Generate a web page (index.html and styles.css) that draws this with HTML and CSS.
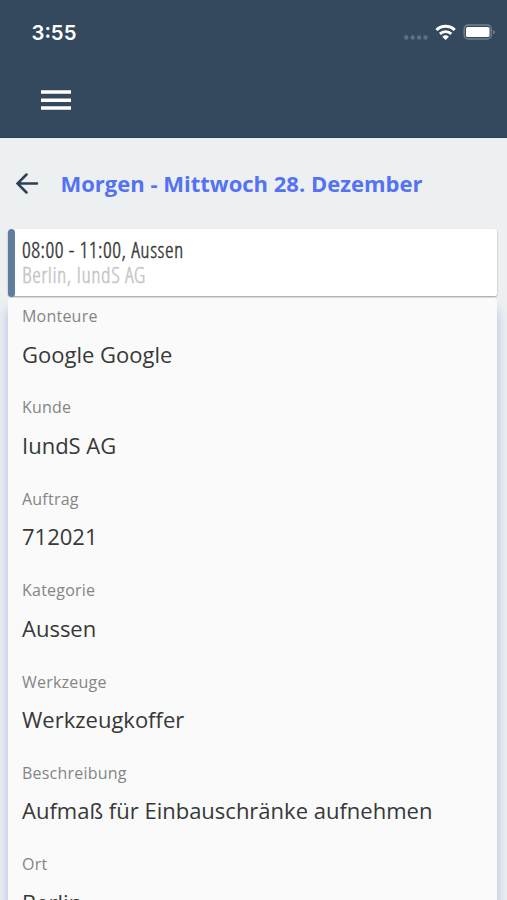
FILE: index.html
```html
<!DOCTYPE html>
<html lang="de">
<head>
<meta charset="utf-8">
<title>Termin</title>
<link rel="stylesheet" href="styles.css">
</head>
<body>
<header class="top">
  <div class="status">
    <span class="time">3:55</span>
    <svg width="94" height="20" viewBox="0 0 94 20">
      <g fill="#5e7082"><circle cx="3.300" cy="15.500" r="2.200"/><circle cx="9.700" cy="15.500" r="2.200"/><circle cx="16.100" cy="15.500" r="2.200"/><circle cx="22.500" cy="15.500" r="2.200"/></g>
      <g fill="none" stroke="#fff" stroke-width="2.800"><path d="M33.400 8a13.200 13.200 0 0 1 18.400 0"/><path d="M36.900 11.900a8.400 8.400 0 0 1 11.400 0"/></g>
      <path d="M39.300 14.700a4.700 4.700 0 0 1 6.600 0L42.600 18z" fill="#fff"/>
      <rect x="61.200" y="3" width="27" height="14" rx="4" fill="none" stroke="#72818f" stroke-width="1.500"/>
      <rect x="63" y="5" width="23.500" height="10" rx="1.500" fill="#fff"/>
      <path d="M90.200 8q3.400 2.200 0 4.500z" fill="#7b8997"/>
    </svg>
  </div>
  <svg class="menu" width="30" height="20" viewBox="0 0 30 20"><path d="M0 2h30M0 10.200h30M0 18h30" stroke="#fff" stroke-width="3.500"/></svg>
</header>
<main>
  <div class="day">
    <svg width="24" height="22" viewBox="0 0 24 22" fill="none" stroke="#2d4053" stroke-width="2.500" stroke-linecap="round"><path d="M22 10.500H2.500M11.500 1.500L2.500 10.500l9 9"/></svg>
    <h1>Morgen - Mittwoch 28. Dezember</h1>
  </div>
  <section class="event">
    <div class="bar"></div>
    <div class="summary">
      <div class="slot">08:00 - 11:00, Aussen</div>
      <div class="place">Berlin, IundS AG</div>
    </div>
  </section>
  <dl class="details">
    <div class="field"><dt>Monteure</dt><dd>Google Google</dd></div>
    <div class="field"><dt>Kunde</dt><dd>IundS AG</dd></div>
    <div class="field"><dt>Auftrag</dt><dd>712021</dd></div>
    <div class="field"><dt>Kategorie</dt><dd>Aussen</dd></div>
    <div class="field"><dt>Werkzeuge</dt><dd>Werkzeugkoffer</dd></div>
    <div class="field"><dt>Beschreibung</dt><dd>Aufmaß für Einbauschränke aufnehmen</dd></div>
    <div class="field"><dt>Ort</dt><dd>Berlin</dd></div>
  </dl>
</main>
</body>
</html>
```
FILE: styles.css
```css
* { box-sizing: border-box; }
html { height: 900px; overflow: hidden; }
body { margin: 0; height: 900px; overflow: hidden; background: #ecf0f1; font-family: "Open Sans", sans-serif; color: #383838; }
.top { height: 138px; background: #34495e; padding: 21px 10px 0 32px; border-bottom: 1px solid #2d4155; }
.status { height: 22px; display: flex; justify-content: space-between; align-items: center; }
.time { font: 600 20.300px/22px Inter, sans-serif; color: #fff; padding-top: 2px; margin-left: -.5px; }
.menu { display: block; margin: 47px 0 0 9px; }
.day { height: 91px; display: flex; align-items: center; padding-left: 15px; gap: 21.500px; }
h1 { margin: -2px 0 0; font-size: 22px; line-height: 30px; font-weight: 700; color: #5472f2; white-space: nowrap; }
.event { display: flex; margin: 0 10px 0 8px; height: 67px; background: #fff; border-radius: 4px 2px 2px 4px; box-shadow: 0 1px 2px #0005; white-space: nowrap; }
.bar { width: 7px; height: 68px; background: #607d9f; border-radius: 4px; }
.summary { padding: 8px 0 0 7px; }
.slot, .place { font-family: "Open Sans Condensed Light", "Open Sans Light", "Open Sans", sans-serif; font-weight: 300; font-size: 22px; letter-spacing: .48px; line-height: 25px; -webkit-text-stroke: .4px currentColor; }
.place { color: #c4c4c4; }
.details { margin: 2px 10px 0 8px; height: 602px; overflow: hidden; padding: 0 14px; background: #fafafa; border-radius: 3px 3px 0 0; box-shadow: 0 12px 12px #536fca66; }
.field { height: 91.400px; }
dt { font-size: 16px; letter-spacing: .22px; line-height: 22px; padding-top: 7px; color: #858585; }
dd { margin: 11.500px 0 0; font-size: 22px; line-height: 30px; white-space: nowrap; }
```
